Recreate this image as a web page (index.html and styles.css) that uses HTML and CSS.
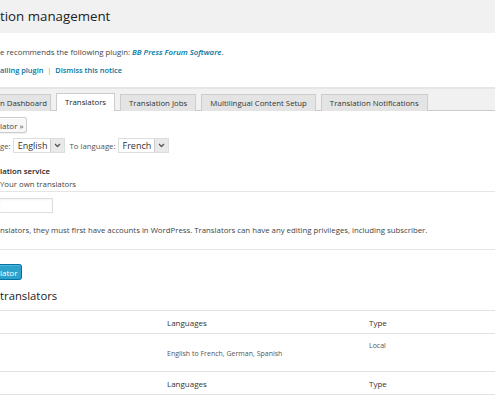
FILE: index.html
```html
<!DOCTYPE html>
<html lang="en">
<head>
    <meta charset="UTF-8">
    <title>Translation management</title>
    <link rel="stylesheet" href="styles.css">
</head>
<body>
    <div class="page-header">
        <h1>tion management</h1>
    </div>

    <div class="notice">
        <p>e recommends the following plugin: <a class="plugin-link" href="#">BB Press Forum Software</a>.</p>
        <p class="notice-actions"><a href="#">alling plugin</a> <span class="sep">|</span> <a href="#">Dismiss this notice</a></p>
    </div>

    <div class="tabs">
        <a class="tab first" href="#">n Dashboard</a>
        <a class="tab active" href="#">Translators</a>
        <a class="tab" href="#">Translation Jobs</a>
        <a class="tab" href="#">Multilingual Content Setup</a>
        <a class="tab" href="#">Translation Notifications</a>
    </div>

    <div class="content">
        <button class="btn">lator &raquo;</button>

        <div class="lang-row">
            <span class="label">ge:</span>
            <span class="select"><span class="select-value">English</span><span class="select-arrow"><svg width="7" height="5" viewBox="0 0 7 5"><path d="M1 1l2.5 2.5L6 1" fill="none" stroke="#555" stroke-width="1.3"/></svg></span></span>
            <span class="label">To language:</span>
            <span class="select"><span class="select-value">French</span><span class="select-arrow"><svg width="7" height="5" viewBox="0 0 7 5"><path d="M1 1l2.5 2.5L6 1" fill="none" stroke="#555" stroke-width="1.3"/></svg></span></span>
        </div>

        <div class="service-title">lation service</div>
        <div class="service-option">Your own translators</div>

        <hr class="rule">

        <div class="text-input"></div>

        <p class="hint">nslators, they must first have accounts in WordPress. Translators can have any editing privileges, including subscriber.</p>

        <hr class="rule">

        <button class="btn btn-primary">lator</button>

        <h2>translators</h2>

        <table class="translators">
            <colgroup>
                <col class="col-name">
                <col class="col-langs">
                <col>
            </colgroup>
            <thead>
                <tr><th></th><th>Languages</th><th>Type</th></tr>
            </thead>
            <tbody>
                <tr>
                    <td></td>
                    <td class="langs">English to French, German, Spanish</td>
                    <td class="type">Local</td>
                </tr>
            </tbody>
            <tfoot>
                <tr><th></th><th>Languages</th><th>Type</th></tr>
            </tfoot>
        </table>
    </div>
</body>
</html>
```

FILE: styles.css
```css
body {
    margin: 0;
    font-family: "Open Sans", sans-serif;
    color: #444;
    background: #fff;
}

a {
    color: #0074a2;
    text-decoration: none;
}

.page-header {
    background: #f1f1f1;
    height: 33px;
    overflow: hidden;
}

.page-header h1 {
    margin: 0;
    padding-top: 7px;
    font-size: 13.3px;
    font-weight: 400;
    line-height: 18px;
    color: #222;
}

.notice {
    height: 54px;
    padding-top: 13px;
    box-sizing: border-box;
    font-size: 7.8px;
}

.notice p {
    margin: 0;
    line-height: 12px;
}

.notice .notice-actions {
    margin-top: 6px;
    font-size: 7.4px;
}

.notice-actions a {
    font-weight: 600;
}

.notice .sep {
    color: #999;
    margin: 0 2px;
}

.plugin-link {
    font-style: italic;
    font-weight: 600;
}

.tabs {
    border-top: 2px solid #e5e5e5;
    border-bottom: 1px solid #ccc;
    background: #f1f1f1;
    padding-top: 4px;
    height: 17px;
    display: flex;
    align-items: flex-end;
    font-size: 7.8px;
}

.tab {
    display: block;
    height: 16px;
    line-height: 16px;
    padding: 0 8px;
    margin-left: 5px;
    margin-bottom: -1px;
    border: 1px solid #ccc;
    border-bottom: none;
    background: #e4e4e4;
    color: #333;
}

.tab.first {
    margin-left: 0;
    padding-left: 0;
    padding-right: 3px;
    border-left: none;
}

.tab.active {
    background: #fff;
    color: #222;
    height: 17px;
}

.content {
    font-size: 7.8px;
}

.btn {
    display: block;
    margin-top: 6px;
    height: 16px;
    padding: 0 3px 0 0;
    font-family: "Open Sans", sans-serif;
    font-size: 8px;
    color: #444;
    background: #f7f7f7;
    border: 1px solid #ccc;
    border-left: none;
    border-radius: 0 3px 3px 0;
    box-shadow: inset 0 1px 0 #fff, 0 1px 0 rgba(0, 0, 0, 0.06);
}

.lang-row {
    display: flex;
    align-items: center;
    margin-top: 5px;
    height: 15px;
}

.label {
    color: #555;
}

.select {
    display: flex;
    height: 15px;
    margin: 0 4px 0 2px;
    border: 1px solid #ddd;
    box-sizing: border-box;
    background: #fff;
}

.select-value {
    font-size: 9px;
    line-height: 13px;
    color: #333;
    padding: 0 3px 0 4px;
    flex: 1;
}

.lang-row .select:first-of-type {
    width: 52px;
}

.lang-row .select:last-of-type {
    width: 51px;
}

.select-arrow {
    width: 13px;
    display: flex;
    align-items: center;
    justify-content: center;
    background: #e9e9e9;
    border-left: 1px solid #ccc;
}

.service-title {
    margin-top: 12px;
    line-height: 12px;
    font-weight: 600;
    color: #222;
}

.service-option {
    line-height: 12px;
    margin-top: 1px;
    color: #444;
}

.rule {
    margin: 1px 0 0;
    border: 0;
    border-top: 1px solid #e5e5e5;
    height: 0;
}

.text-input {
    width: 53px;
    height: 15px;
    margin-top: 6px;
    border: 1px solid #ddd;
    border-left: none;
    box-sizing: border-box;
    box-shadow: inset 0 1px 2px rgba(0, 0, 0, 0.05);
}

.hint {
    margin: 11px 0 13px;
    line-height: 12px;
}

.btn.btn-primary {
    margin-top: 14px;
    height: 16px;
    padding: 0 4px 0 0;
    background: #2ea2cc;
    border-color: #0074a2;
    color: #fff;
    box-shadow: inset 0 1px 0 rgba(120, 200, 230, 0.5);
}

h2 {
    margin: 8px 0 0;
    font-size: 11.3px;
    font-weight: 400;
    line-height: 16px;
    color: #222;
}

.translators {
    margin-top: 6px;
    width: 100%;
    border-collapse: collapse;
}

.col-name {
    width: 158px;
}

.col-langs {
    width: 202px;
}

.translators th {
    text-align: left;
    font-weight: 400;
    font-size: 8px;
    color: #333;
    height: 22px;
    padding: 0 9px;
    border-top: 1px solid #e1e1e1;
    border-bottom: 1px solid #e1e1e1;
}

.translators tbody tr {
    height: 38px;
}

.translators td {
    padding: 0 9px;
    font-size: 7px;
    color: #555;
    vertical-align: top;
}

.translators td.type {
    padding-top: 7px;
}

.translators td.langs {
    padding-top: 15px;
}
```
